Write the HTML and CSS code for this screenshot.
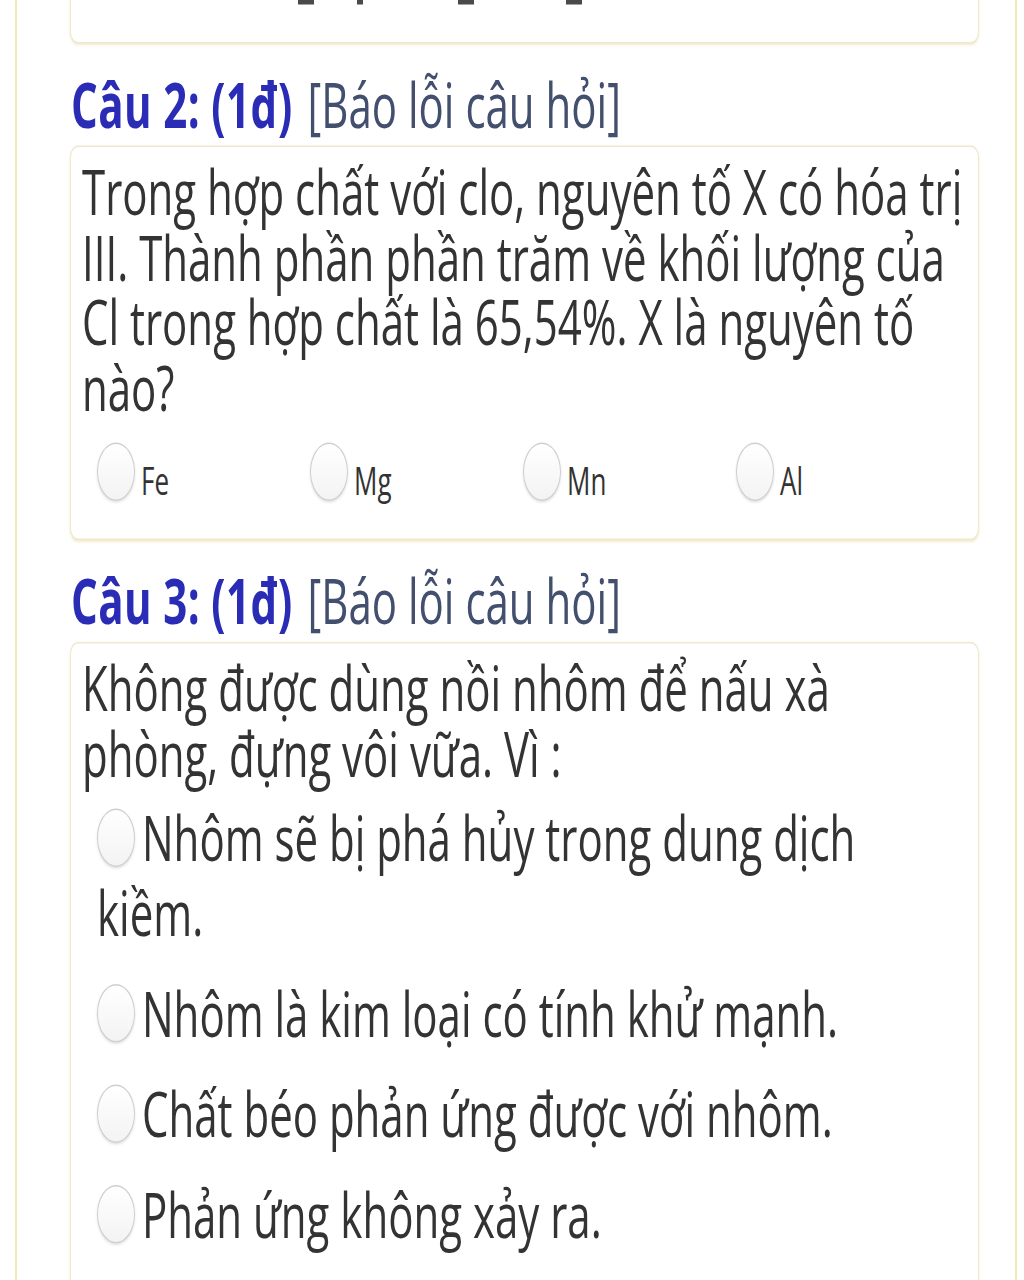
FILE: index.html
```html
<!DOCTYPE html>
<html lang="vi">
<head>
<meta charset="utf-8">
<title>Câu hỏi</title>
<link rel="stylesheet" href="styles.css">
</head>
<body>
<div class="screen">
  <div class="frame">
    <div class="card card-prev">
      <div class="frags">
        <span class="frag frag-a"></span>
        <span class="frag frag-b"></span>
        <span class="frag frag-c"></span>
        <span class="frag frag-d"></span>
      </div>
    </div>

    <h2 class="q-title"><span class="q-num">Câu 2: (1đ)</span> <span class="q-report">[Báo lỗi câu hỏi]</span></h2>
    <div class="card card-q2">
      <div class="q-text">Trong hợp chất với clo, nguyên tố X có hóa trị III. Thành phần phần trăm về khối lượng của Cl trong hợp chất là 65,54%. X là nguyên tố nào?</div>
      <div class="opts-row">
        <label class="opt-s"><span class="radio"></span>Fe</label>
        <label class="opt-s"><span class="radio"></span>Mg</label>
        <label class="opt-s"><span class="radio"></span>Mn</label>
        <label class="opt-s"><span class="radio"></span>Al</label>
      </div>
    </div>

    <h2 class="q-title"><span class="q-num">Câu 3: (1đ)</span> <span class="q-report">[Báo lỗi câu hỏi]</span></h2>
    <div class="card card-q3">
      <div class="q-text">Không được dùng nồi nhôm để nấu xà phòng, đựng vôi vữa. Vì :</div>
      <div class="opts-col">
        <label class="opt-l"><span class="radio"></span>Nhôm sẽ bị phá hủy trong dung dịch kiềm.</label>
        <label class="opt-l"><span class="radio"></span>Nhôm là kim loại có tính khử mạnh.</label>
        <label class="opt-l"><span class="radio"></span>Chất béo phản ứng được với nhôm.</label>
        <label class="opt-l"><span class="radio"></span>Phản ứng không xảy ra.</label>
      </div>
    </div>
  </div>
</div>
</body>
</html>
```

FILE: styles.css
```css
html, body {
  margin: 0;
  padding: 0;
  background: #ffffff;
}

body {
  height: 1280px;
  overflow: hidden;
}

/* the capture is stretched vertically (circles render as ellipses) */
.screen {
  width: 1024px;
  transform: scaleY(1.5);
  transform-origin: 0 0;
}

.frame {
  margin-left: 15px;
  width: 998px;
  min-height: 880px;
  border-left: 2px solid #f1e9b6;
  border-right: 2px solid #f1e9b6;
}

.card {
  margin-left: 53px;
  width: 907px;
  background: #ffffff;
  border: 1px solid #efe8cc;
  border-radius: 8px;
  box-shadow: 0 1px 2px rgba(228, 216, 160, 0.5);
}

.card-prev {
  height: 28px;
  border-top: 0;
  border-radius: 0 0 8px 8px;
}

.frags {
  display: flex;
  padding-left: 227px;
}

.frag {
  display: block;
  height: 3px;
  background: #4a4a4a;
}

.frag-a { width: 16px; }
.frag-b { width: 6px; margin-left: 43px; }
.frag-c { width: 16px; margin-left: 95px; }
.frag-d { width: 16px; margin-left: 92px; }

.q-title {
  margin: 15px 0 3px 54px;
  font-family: "Open Sans", "Noto Sans", sans-serif;
  font-size: 42px;
  line-height: 50px;
  font-weight: 400;
  white-space: nowrap;
}

.q-num {
  margin-right: 4px;
  color: #2a2cb6;
  font-weight: 700;
  letter-spacing: 0.4px;
}

.q-report {
  color: #434f6e;
}

.q-text {
  padding: 7px 10px 0 11px;
  font-family: "Open Sans", "Noto Sans", sans-serif;
  font-size: 42px;
  line-height: 43.5px;
  color: #333333;
}

.radio {
  display: inline-block;
  box-sizing: border-box;
  width: 38px;
  height: 39px;
  margin-right: 6px;
  vertical-align: -4px;
  border: 1px solid #cfcfcf;
  border-radius: 50%;
  background: linear-gradient(#ffffff, #f3f3f3);
  box-shadow: 0 1px 2px rgba(0, 0, 0, 0.12);
}

.opts-row {
  display: flex;
  margin-top: 16px;
  padding: 0 0 19px 26px;
}

.opt-s {
  width: 213px;
  font-family: "Open Sans", "Noto Sans", sans-serif;
  font-size: 26px;
  line-height: 40px;
  color: #333333;
}

.opts-col {
  display: flex;
  flex-direction: column;
  gap: 17px;
  margin-top: 10px;
  padding: 0 20px 40px 26px;
}

.opt-l {
  display: block;
  font-family: "Open Sans", "Noto Sans", sans-serif;
  font-size: 42px;
  line-height: 50px;
  color: #333333;
}

.opt-l .radio {
  margin-right: 7px;
}
```
